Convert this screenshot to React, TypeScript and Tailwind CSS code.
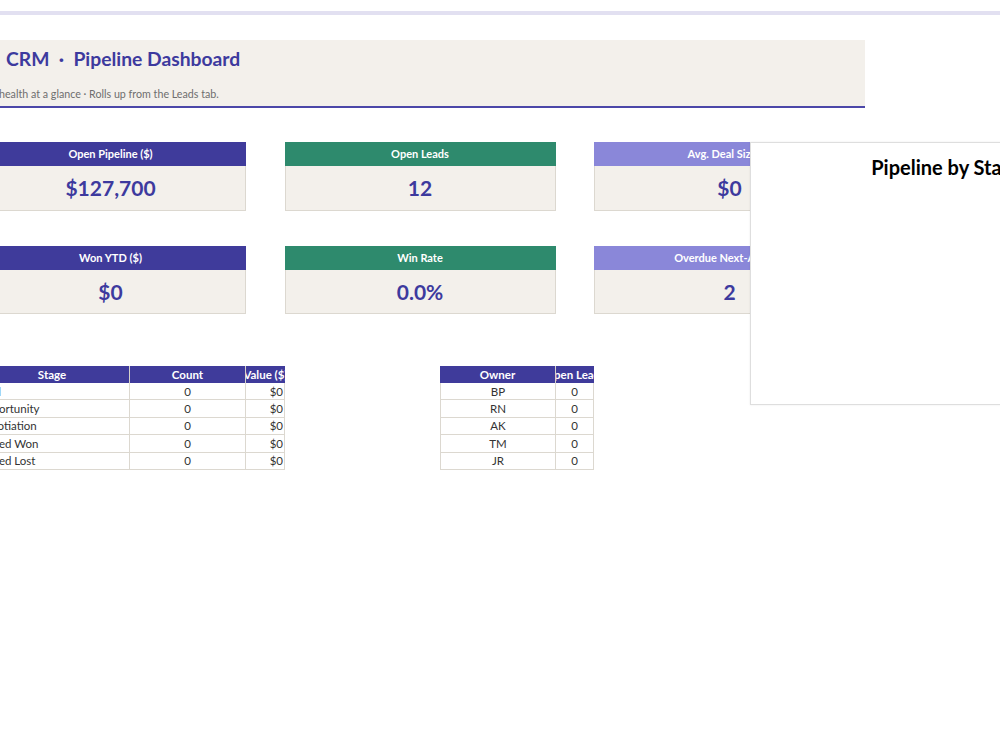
import React from "react";

const kpis = [
  [
    { label: "Open Pipeline ($)", value: "$127,700", head: "bg-[#3f3b9b]" },
    { label: "Open Leads", value: "12", head: "bg-[#2e8a6d]" },
    { label: "Avg. Deal Size ($)", value: "$0", head: "bg-[#8a87d9]" },
  ],
  [
    { label: "Won YTD ($)", value: "$0", head: "bg-[#3f3b9b]" },
    { label: "Win Rate", value: "0.0%", head: "bg-[#2e8a6d]" },
    { label: "Overdue Next-Actions", value: "2", head: "bg-[#8a87d9]" },
  ],
];

const stages = ["Qual", "Opportunity", "Negotiation", "Closed Won", "Closed Lost"];
const owners = ["BP", "RN", "AK", "TM", "JR"];

function Card({ label, value, head, tall }: { label: string; value: string; head: string; tall: boolean }) {
  return (
    <div className="w-[271px] flex flex-col">
      <div className={`${head} h-[24px] flex items-center justify-center text-white font-bold text-[11px] whitespace-nowrap overflow-hidden`}>
        {label}
      </div>
      <div
        className={`bg-[#f3f0eb] ${tall ? "h-[45px]" : "h-[44px]"} border-x border-b border-[#dcd8d0] flex items-center justify-center text-[#3d3a9e] font-bold text-[21px]`}
      >
        {value}
      </div>
    </div>
  );
}

function HeadCell({ w, children }: { w: string; children: React.ReactNode }) {
  return (
    <div className={`${w} h-full flex items-center justify-center overflow-hidden whitespace-nowrap border-r border-[#d6d2ca] last:border-r-0`}>
      {children}
    </div>
  );
}

export default function App() {
  return (
    <div
      className="w-[1000px] h-[750px] bg-white overflow-hidden relative text-[#333]"
      style={{ fontFamily: "Lato, 'Open Sans', sans-serif" }}
    >
      <div className="mt-[11px] h-[4px] bg-[#e2e0f1]" />
      <div className="ml-[-25px]">
        {/* Header band */}
        <div className="mt-[25px] w-[890px] h-[68px] bg-[#f3f0eb] border-b-2 border-[#4b47a8] flex flex-col pl-[6px]">
          <div className="pl-[25px] mt-[6px] text-[19.3px] font-bold text-[#3d3a9e] leading-[26px] whitespace-nowrap">
            CRM&nbsp; ·&nbsp; Pipeline Dashboard
          </div>
          <div className="ml-[-22px] mt-[14px] text-[10.7px] text-[#6e6e6e] whitespace-nowrap">
            Pipeline health at a glance · Rolls up from the Leads tab.
          </div>
        </div>

        {/* KPI cards */}
        <div className="mt-[34px] flex flex-col gap-[35px]">
          {kpis.map((row, i) => (
            <div key={i} className="flex gap-[38.5px]">
              {row.map((k) => (
                <Card key={k.label} {...k} tall={i === 0} />
              ))}
            </div>
          ))}
        </div>

        {/* Tables */}
        <div className="mt-[52px] flex gap-[155px] text-[11.5px]">
          <div className="w-[310px]">
            <div className="h-[17px] bg-[#3f3b9b] text-white font-bold flex">
              <HeadCell w="w-[155px]">Stage</HeadCell>
              <HeadCell w="w-[116px]">Count</HeadCell>
              <HeadCell w="w-[39px]">Value ($)</HeadCell>
            </div>
            {stages.map((s) => (
              <div key={s} className="h-[17.4px] flex border-b border-[#dcd8d0]">
                <div className="w-[155px] pl-[2px] flex items-center border-r border-[#dcd8d0] whitespace-nowrap">{s}</div>
                <div className="w-[116px] flex items-center justify-center border-r border-[#dcd8d0]">0</div>
                <div className="w-[39px] flex items-center justify-end pr-[1px] border-r border-[#dcd8d0]">$0</div>
              </div>
            ))}
          </div>
          <div className="w-[154px]">
            <div className="h-[17px] bg-[#3f3b9b] text-white font-bold flex">
              <HeadCell w="w-[116px]">Owner</HeadCell>
              <HeadCell w="w-[38px]">Open Leads</HeadCell>
            </div>
            {owners.map((o) => (
              <div key={o} className="h-[17.4px] flex border-b border-l border-[#dcd8d0]">
                <div className="w-[115px] flex items-center justify-center border-r border-[#dcd8d0]">{o}</div>
                <div className="w-[38px] flex items-center justify-center border-r border-[#dcd8d0]">0</div>
              </div>
            ))}
          </div>
        </div>
      </div>

      {/* Chart overlay */}
      <div className="absolute left-[750px] top-[142px] w-[394px] h-[263px] bg-white border border-[#dedede] shadow-[0_0_2px_rgba(0,0,0,0.08)]">
        <div className="mt-[12px] leading-[24px] text-center text-[20px] font-bold text-black">Pipeline by Stage</div>
      </div>
    </div>
  );
}
